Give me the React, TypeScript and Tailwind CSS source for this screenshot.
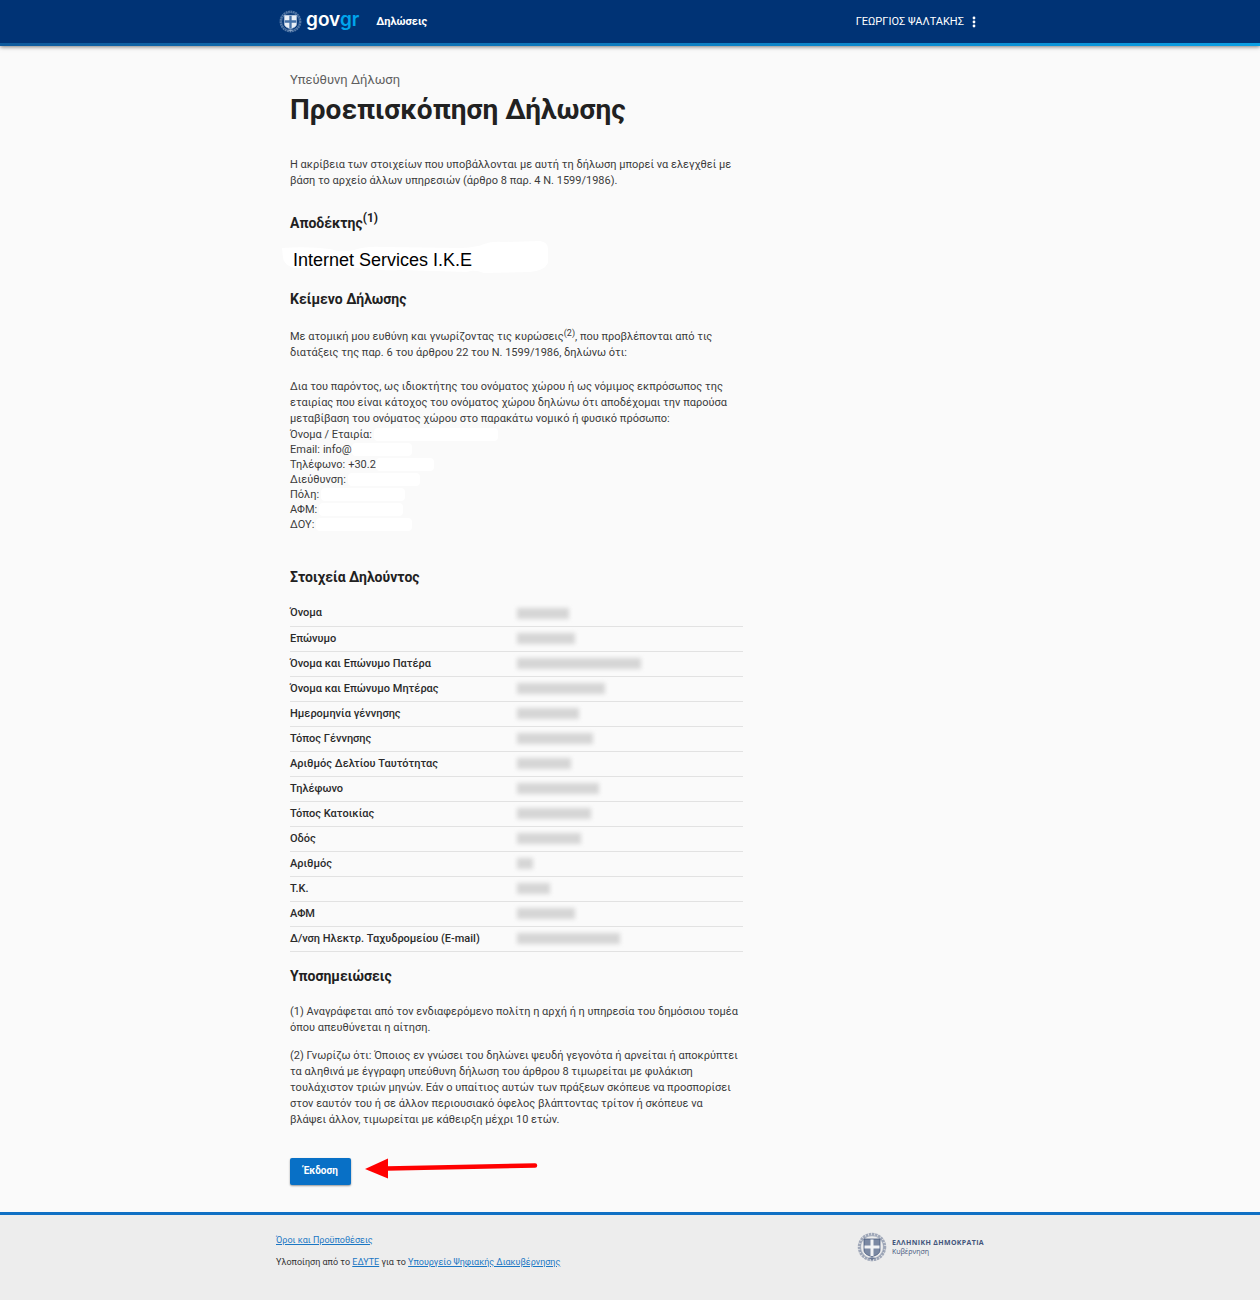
import React from 'react';

interface Field {
  label: string;
  value?: string;
  mask: string;
}

const TRANSFER_FIELDS: Field[] = [
  { label: 'Όνομα / Εταιρία:', mask: 'w-[124px]' },
  { label: 'Email:', value: 'info@', mask: 'w-[60px]' },
  { label: 'Τηλέφωνο:', value: '+30.2', mask: 'w-[58px]' },
  { label: 'Διεύθυνση:', mask: 'w-[72px]' },
  { label: 'Πόλη:', mask: 'w-[84px]' },
  { label: 'ΑΦΜ:', mask: 'w-[84px]' },
  { label: 'ΔΟΥ:', mask: 'w-[96px]' },
];

const PERSON_FIELDS: Field[] = [
  { label: 'Όνομα', mask: 'w-[52px]' },
  { label: 'Επώνυμο', mask: 'w-[58px]' },
  { label: 'Όνομα και Επώνυμο Πατέρα', mask: 'w-[124px]' },
  { label: 'Όνομα και Επώνυμο Μητέρας', mask: 'w-[88px]' },
  { label: 'Ημερομηνία γέννησης', mask: 'w-[62px]' },
  { label: 'Τόπος Γέννησης', mask: 'w-[76px]' },
  { label: 'Αριθμός Δελτίου Ταυτότητας', mask: 'w-[54px]' },
  { label: 'Τηλέφωνο', mask: 'w-[82px]' },
  { label: 'Τόπος Κατοικίας', mask: 'w-[74px]' },
  { label: 'Οδός', mask: 'w-[64px]' },
  { label: 'Αριθμός', mask: 'w-[16px]' },
  { label: 'Τ.Κ.', mask: 'w-[33px]' },
  { label: 'ΑΦΜ', mask: 'w-[58px]' },
  { label: 'Δ/νση Ηλεκτρ. Ταχυδρομείου (E-mail)', mask: 'w-[103px]' },
];

// Coat of arms: laurel wreath around a shield with a cross
const Emblem: React.FC<{ className: string; shield: string; cross: string }> = ({ className, shield, cross }) => (
  <svg viewBox="0 0 60 60" className={className} fill="none" aria-hidden="true">
    <circle cx="30" cy="30" r="26" stroke="currentColor" strokeWidth="5" strokeDasharray="5 1.4" opacity="0.45" />
    <circle cx="30" cy="30" r="23" stroke="currentColor" strokeWidth="2.5" opacity="0.35" />
    <path d="M14 14h32v22c0 7-7 11-16 13-9-2-16-6-16-13z" fill={shield} stroke="currentColor" strokeWidth="1.5" />
    <path d="M27 15h6v33h-6z M15 27h30v6H15z" fill={cross} />
    <path d="M23 52l7-2 7 2-7 4z" fill="currentColor" opacity="0.6" />
  </svg>
);

const SectionTitle: React.FC<{ className: string; children: React.ReactNode }> = ({ className, children }) => (
  <h2 className={`text-[14px] leading-[20px] font-bold text-[#212121] ${className}`}>{children}</h2>
);

const Header = () => (
  <header className="relative bg-[#003375] shadow-[0_1px_4px_rgba(0,0,0,0.5)]">
    <div className="max-w-[708px] h-[43px] mx-auto flex items-center justify-between">
      <div className="flex items-center">
        <a href="#" className="flex items-center ml-[3px]">
          <Emblem className="size-[23px] text-[#b9cbe3]" shield="#e8eef6" cross="#4471a8" />
          <span className="ml-1 mb-1 font-[Inter,sans-serif] text-[19px] leading-[22px] font-semibold text-white">
            gov<span className="text-[#00a5ec]">gr</span>
          </span>
        </a>
        <a href="#" className="ml-[17px] text-[11px] font-bold text-white">Δηλώσεις</a>
      </div>
      <button type="button" className="mr-0.5 flex items-center text-[11px] text-white">
        ΓΕΩΡΓΙΟΣ ΨΑΛΤΑΚΗΣ
        <svg viewBox="0 0 16 16" className="ml-0.5 size-4" fill="currentColor" aria-hidden="true">
          <circle cx="8" cy="4" r="1.4" />
          <circle cx="8" cy="8" r="1.4" />
          <circle cx="8" cy="12" r="1.4" />
        </svg>
      </button>
    </div>
    <div className="h-[3px] bg-linear-to-r from-[#0e5a9c] to-[#0a9fe4]" />
  </header>
);

const Recipient = () => (
  <div className="relative mt-2 h-8">
    <svg viewBox="0 0 268 32" className="absolute top-0 -left-2 w-[268px] h-8" aria-hidden="true">
      <path d="M0 7Q25 5 48 8Q60 12 72 9Q85 5 100 6L180 7Q196 6 202 3Q210 0 222 1L258 0Q266 1 266 8L266 22Q262 30 248 31L202 32Q192 28 185 31L120 29Q90 30 75 27L12 27Q2 24 1 17z" fill="#fff" />
    </svg>
    <p className="relative pl-[3px] pt-[9px] font-['Liberation_Sans',Arial,sans-serif] text-[18px] leading-[20px] text-black">
      Internet Services I.K.E
    </p>
  </div>
);

const Footer = () => (
  <footer className="grow bg-[#ededed] border-t-[3px] border-[#1070c4]">
    <div className="max-w-[708px] mx-auto pt-[17px] flex items-start justify-between text-[9px] leading-[16px] text-[#333]">
      <div>
        <p>
          <a href="#" className="text-[#1b77c4] underline">Όροι και Προϋποθέσεις</a>
        </p>
        <p className="mt-[6px]">
          Υλοποίηση από το <a href="#" className="text-[#1b77c4] underline">ΕΔΥΤΕ</a> για το{' '}
          <a href="#" className="text-[#1b77c4] underline">Υπουργείο Ψηφιακής Διακυβέρνησης</a>
        </p>
      </div>
      <div className="flex items-center text-[#43557b]">
        <Emblem className="size-[30px]" shield="#7b89a3" cross="#f2f3f5" />
        <div className="ml-[5px] font-['Open_Sans',sans-serif] text-[7px] leading-[9px]">
          <p className="font-bold tracking-wider">ΕΛΛΗΝΙΚΗ ΔΗΜΟΚΡΑΤΙΑ</p>
          <p>Κυβέρνηση</p>
        </div>
      </div>
    </div>
  </footer>
);

export default function App() {
  return (
    <div className="min-h-screen flex flex-col bg-[#fafafa] font-[Roboto,sans-serif] text-[11px] leading-[16px] text-[#3a3a3a]">
      <Header />

      <main className="w-full max-w-[708px] mx-auto px-[14px] pt-[25px] pb-[27px]">
        <div className="w-2/3">
          <p className="text-[13px] leading-[18px] text-[#5f5f5f]">Υπεύθυνη Δήλωση</p>
          <h1 className="mt-[3px] text-[28px] leading-[36px] font-bold text-[#212121] whitespace-nowrap">Προεπισκόπηση Δήλωσης</h1>

          <p className="mt-[29px]">
            Η ακρίβεια των στοιχείων που υποβάλλονται με αυτή τη δήλωση μπορεί να ελεγχθεί με
            βάση το αρχείο άλλων υπηρεσιών (άρθρο 8 παρ. 4 Ν. 1599/1986).
          </p>

          <SectionTitle className="mt-6">Αποδέκτης<sup className="text-[12px]">(1)</sup></SectionTitle>
          <Recipient />

          <SectionTitle className="mt-4">Κείμενο Δήλωσης</SectionTitle>
          <p className="mt-5">
            Με ατομική μου ευθύνη και γνωρίζοντας τις κυρώσεις<sup className="text-[9px]">(2)</sup>, που προβλέπονται από τις
            διατάξεις της παρ. 6 του άρθρου 22 του Ν. 1599/1986, δηλώνω ότι:
          </p>
          <p className="mt-[18px]">
            Δια του παρόντος, ως ιδιοκτήτης του ονόματος χώρου ή ως νόμιμος εκπρόσωπος της
            εταιρίας που είναι κάτοχος του ονόματος χώρου δηλώνω ότι αποδέχομαι την παρούσα
            μεταβίβαση του ονόματος χώρου στο παρακάτω νομικό ή φυσικό πρόσωπο:
          </p>
          <ul className="leading-[15px]">
            {TRANSFER_FIELDS.map((field) => (
              <li key={field.label} className="flex items-center">
                {field.label}
                {field.value && <span className="ml-[3px]">{field.value}</span>}
                <span className={`h-[13px] rounded-sm bg-white ${field.value ? '' : 'ml-[2px]'} ${field.mask}`} />
              </li>
            ))}
          </ul>

          <SectionTitle className="mt-[35px]">Στοιχεία Δηλούντος</SectionTitle>
          <table className="mt-[14px] w-full table-fixed">
            <tbody>
              {PERSON_FIELDS.map((field) => (
                <tr key={field.label} className="h-[25px] border-b border-[#e2e2e2]">
                  <th scope="row" className="w-1/2 p-0 text-left font-medium text-[#2b2b2b]">{field.label}</th>
                  <td className="p-0">
                    <div className={`h-[11px] bg-[#d6d6d6] blur-[2px] ${field.mask}`} />
                  </td>
                </tr>
              ))}
            </tbody>
          </table>

          <SectionTitle className="mt-[14px]">Υποσημειώσεις</SectionTitle>
          <p className="mt-[18px]">
            (1) Αναγράφεται από τον ενδιαφερόμενο πολίτη η αρχή ή η υπηρεσία του δημόσιου τομέα
            όπου απευθύνεται η αίτηση.
          </p>
          <p className="mt-3">
            (2) Γνωρίζω ότι: Όποιος εν γνώσει του δηλώνει ψευδή γεγονότα ή αρνείται ή αποκρύπτει
            τα αληθινά με έγγραφη υπεύθυνη δήλωση του άρθρου 8 τιμωρείται με φυλάκιση
            τουλάχιστον τριών μηνών. Εάν ο υπαίτιος αυτών των πράξεων σκόπευε να προσπορίσει
            στον εαυτόν του ή σε άλλον περιουσιακό όφελος βλάπτοντας τρίτον ή σκόπευε να
            <br />
            βλάψει άλλον, τιμωρείται με κάθειρξη μέχρι 10 ετών.
          </p>
        </div>

        <div className="mt-[30px] flex items-start">
          <button type="button" className="w-[61px] h-[27px] rounded-xs bg-[#0870c6] text-[10px] font-bold text-white shadow-[0_1px_2px_rgba(0,0,0,0.4)]">
            Έκδοση
          </button>
          <svg viewBox="0 0 174 22" className="ml-[14px] w-[174px] h-[22px]" aria-hidden="true">
            <path d="M22 10.5L170 7.5" stroke="#f00" strokeWidth="4.5" strokeLinecap="round" />
            <path d="M0 11L23 0.5v20z" fill="#f00" />
          </svg>
        </div>
      </main>

      <Footer />
    </div>
  );
}
